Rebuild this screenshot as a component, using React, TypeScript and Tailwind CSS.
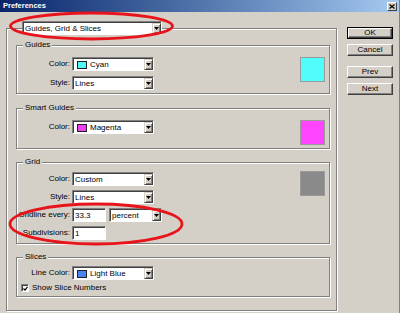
import React from 'react';

const bg = 'bg-[#d4d0c8]';

function Arrow() {
  return (
    <div className="flex w-[9px] self-stretch items-center justify-center bg-[#d4d0c8] border border-t-[#d4d0c8] border-l-[#d4d0c8] border-b-[#404040] border-r-[#404040] shadow-[inset_1px_1px_0_#fff,inset_-1px_-1px_0_#808080]">
      <svg width="5" height="3" viewBox="0 0 5 3">
        <polygon points="0,0 5,0 2.5,3" fill="#000" />
      </svg>
    </div>
  );
}

function Select({ value, swatch, className = 'w-[82px]' }: { value: string; swatch?: string; className?: string }) {
  return (
    <div className={`flex h-[14px] items-center bg-white border border-t-[#808080] border-l-[#808080] border-b-white border-r-white shadow-[inset_1px_1px_0_#404040] pl-[2px] pt-[1px] ${className}`}>
      {swatch && <span className={`ml-[2px] mr-[3px] h-[8px] w-[10px] border border-[#202020] ${swatch}`} />}
      <span className="leading-[10px] whitespace-nowrap">{value}</span>
      <span className="ml-auto flex self-stretch">
        <Arrow />
      </span>
    </div>
  );
}

function Input({ value }: { value: string }) {
  return (
    <div className="flex h-[14px] w-[34px] items-center bg-white border border-t-[#808080] border-l-[#808080] border-b-white border-r-white shadow-[inset_1px_1px_0_#404040] pl-[2px] pt-[1px]">
      <span className="leading-[10px]">{value}</span>
    </div>
  );
}

function Row({ label, children }: { label: string; children: React.ReactNode }) {
  return (
    <div className="flex items-center">
      <span className="w-[53px] text-right whitespace-nowrap leading-[10px]">{label}</span>
      <div className="ml-[2px] flex items-center gap-[3px]">{children}</div>
    </div>
  );
}

function Group({ title, children, className = '' }: { title: string; children: React.ReactNode; className?: string }) {
  return (
    <fieldset className={`border border-[#808080] shadow-[inset_1px_1px_0_#fff,1px_1px_0_#fff] ${className}`}>
      <legend className={`ml-[6px] px-[2px] ${bg} leading-[10px]`}>{title}</legend>
      {children}
    </fieldset>
  );
}

function Swatch({ color }: { color: string }) {
  return <div className={`ml-auto h-[25px] w-[25px] border border-[#9a9a9a] ${color}`} />;
}

function Button({ label, def }: { label: string; def?: boolean }) {
  return (
    <div className={`flex h-[12px] w-[46px] items-center justify-center ${def ? 'border border-black' : ''}`}>
      <div className="flex h-full w-full items-center justify-center border border-t-white border-l-white border-b-[#404040] border-r-[#404040] shadow-[inset_-1px_-1px_0_#808080] leading-[10px]">
        {label}
      </div>
    </div>
  );
}

export default function App() {
  return (
    <div className={`relative h-[313px] w-[400px] overflow-hidden ${bg} border-r border-[#808080] font-['Liberation_Sans',Arial,sans-serif] text-[8px] text-black`}>
      {/* Title bar */}
      <div className="flex h-[12px] items-center bg-gradient-to-r from-[#0a246a] to-[#a6caf0] pl-[3px] pr-[2px]">
        <span className="text-[7.5px] font-bold leading-[10px] text-white">Preferences</span>
        <div className="ml-auto flex h-[9px] w-[10px] items-center justify-center bg-[#d4d0c8] border border-t-white border-l-white border-b-[#404040] border-r-[#404040]">
          <svg width="6" height="5" viewBox="0 0 6 5">
            <path d="M0.5 0.5 L5.5 4.5 M5.5 0.5 L0.5 4.5" stroke="#000" strokeWidth="1.2" />
          </svg>
        </div>
      </div>

      <div className="flex pl-[6px]">
        {/* Main panel */}
        <div className="w-[331px] pt-[9px]">
          <fieldset className="border border-[#808080] shadow-[inset_1px_1px_0_#fff,1px_1px_0_#fff] pl-[9px] pr-[6px] pt-[5px] pb-[13px]">
            <legend className={`ml-[6px] ${bg}`}>
              <Select value="Guides, Grid & Slices" className="w-[140px] h-[13px]" />
            </legend>

            <Group title="Guides">
              <div className="flex items-start pt-[7px] pb-[3px] pr-[4px]">
                <div className="flex flex-col gap-[5px]">
                  <Row label="Color:">
                    <Select value="Cyan" swatch="bg-[#50f8f8]" />
                  </Row>
                  <Row label="Style:">
                    <Select value="Lines" />
                  </Row>
                </div>
                <Swatch color="bg-[#50fcfc]" />
              </div>
            </Group>

            <Group title="Smart Guides" className="mt-[9px]">
              <div className="flex items-start pt-[7px] pb-[3px] pr-[4px]">
                <Row label="Color:">
                  <Select value="Magenta" swatch="bg-[#f040f0]" />
                </Row>
                <Swatch color="bg-[#ff44ff]" />
              </div>
            </Group>

            <Group title="Grid" className="mt-[8px]">
              <div className="flex items-start pt-[4px] pb-[3px] pr-[4px]">
                <div className="flex flex-col gap-[4px] pt-[1px]">
                  <Row label="Color:">
                    <Select value="Custom" />
                  </Row>
                  <Row label="Style:">
                    <Select value="Lines" />
                  </Row>
                  <Row label="Gridline every:">
                    <Input value="33.3" />
                    <Select value="percent" className="w-[53px]" />
                  </Row>
                  <Row label="Subdivisions:">
                    <Input value="1" />
                  </Row>
                </div>
                <Swatch color="bg-[#8a8a8a]" />
              </div>
            </Group>

            <Group title="Slices" className="mt-[8px]">
              <div className="flex flex-col gap-[3px] pt-[4px] pb-[3px]">
                <Row label="Line Color:">
                  <Select value="Light Blue" swatch="bg-[#4a84f0]" />
                </Row>
                <label className="flex items-center pl-[4px]">
                  <span className="flex h-[8px] w-[8px] items-center justify-center bg-white border border-t-[#808080] border-l-[#808080] border-b-white border-r-white shadow-[inset_1px_1px_0_#404040]">
                    <svg width="5" height="5" viewBox="0 0 5 5">
                      <path d="M0.5 2.5 L2 4 L4.5 0.8" stroke="#000" strokeWidth="1.2" fill="none" />
                    </svg>
                  </span>
                  <span className="ml-[3px] leading-[10px]">Show Slice Numbers</span>
                </label>
              </div>
            </Group>
          </fieldset>
        </div>

        {/* Buttons */}
        <div className="ml-[10px] flex flex-col pt-[15px]">
          <Button label="OK" def />
          <div className="mt-[5px]">
            <Button label="Cancel" />
          </div>
          <div className="mt-[10px]">
            <Button label="Prev" />
          </div>
          <div className="mt-[5px]">
            <Button label="Next" />
          </div>
        </div>
      </div>

      {/* Red annotation ellipses */}
      <svg className="pointer-events-none absolute inset-0" width="400" height="313" viewBox="0 0 400 313">
        <ellipse cx="91.5" cy="26" rx="81" ry="13" fill="none" stroke="#e8141b" strokeWidth="2.8" />
        <ellipse cx="96" cy="224" rx="86" ry="20" fill="none" stroke="#e8141b" strokeWidth="2.8" />
      </svg>
    </div>
  );
}
